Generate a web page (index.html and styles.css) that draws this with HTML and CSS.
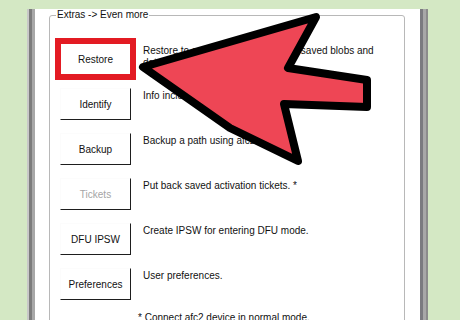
FILE: index.html
```html
<!DOCTYPE html>
<html lang="en">
<head>
  <meta charset="UTF-8">
  <meta name="viewport" content="width=device-width, initial-scale=1.0">
  <title>Extras - Even more</title>
  <link rel="stylesheet" href="styles.css">
</head>
<body>
  <div class="window">
    <fieldset class="group">
      <legend>Extras -&gt; Even more</legend>
      <div class="rows">
        <div class="row">
          <button class="btn marked">Restore</button>
          <p class="desc">Restore to any firmware using your saved blobs and data.</p>
        </div>
        <div class="row">
          <button class="btn">Identify</button>
          <p class="desc">Info including ECID, model and more.</p>
        </div>
        <div class="row">
          <button class="btn">Backup</button>
          <p class="desc">Backup a path using afc2.*</p>
        </div>
        <div class="row">
          <button class="btn disabled">Tickets</button>
          <p class="desc">Put back saved activation tickets. *</p>
        </div>
        <div class="row">
          <button class="btn">DFU IPSW</button>
          <p class="desc">Create IPSW for entering DFU mode.</p>
        </div>
        <div class="row">
          <button class="btn">Preferences</button>
          <p class="desc">User preferences.</p>
        </div>
      </div>
      <p class="note">* Connect afc2 device in normal mode.</p>
    </fieldset>
  </div>

  <svg class="arrow" width="460" height="320" viewBox="0 0 460 320">
    <polygon points="143,67 316,17 288,68 367,80 367,107 284,104 298,161 230,128"
             fill="#ee4655" stroke="#000" stroke-width="8" stroke-linejoin="round"/>
  </svg>
</body>
</html>
```

FILE: styles.css
```css
body {
  margin: 0;
  height: 320px;
  overflow: hidden;
  position: relative;
  background: #d4e8c4;
  font-family: "Liberation Sans", Arial, sans-serif;
  font-size: 10px;
  color: #111;
}
.window {
  margin-left: 27px;
  width: 401px;
  height: 320px;
  box-sizing: border-box;
  padding: 0 23px 0 22px;
  background: linear-gradient(to right,
    #c8c8c8 0 2px, #7c7c7c 2px 5px, #a8a8a8 5px 8px,
    #fff 8px 393px,
    #7b7b80 393px 396px, #a8a8a8 396px 399px, #8c8c8c 399px 401px);
}
.group {
  margin: 9px 0 0;
  padding: 22px 0 0 10px;
  border: 1px solid #b8b8b8;
  border-radius: 3px;
  min-width: 0;
}
.group legend {
  margin-left: -4px;
  padding: 0 1px;
  line-height: 12px;
}
.rows {
  display: flex;
  flex-direction: column;
  gap: 13px;
}
.row {
  display: flex;
  align-items: flex-start;
  gap: 12px;
}
.btn {
  width: 71px;
  height: 32px;
  padding: 0;
  background: #fff;
  border: 1px solid;
  border-color: #fcfcfc #1e1e1e #1e1e1e #fcfcfc;
  font: inherit;
  color: #111;
}
.btn.disabled {
  color: #a5a5a5;
}
.btn.marked {
  outline: 6px solid #e31b23;
  outline-offset: -1px;
}
.desc {
  margin: 0;
  padding-top: 2px;
  max-width: 240px;
  line-height: 12px;
}
.note {
  margin: 12px 0 0 78px;
  line-height: 12px;
}
.arrow {
  position: absolute;
  top: 0;
  left: 0;
  pointer-events: none;
}
```
